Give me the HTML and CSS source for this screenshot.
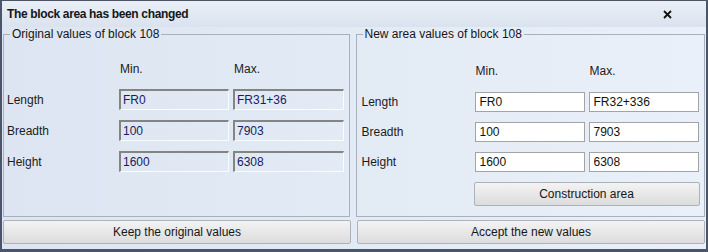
FILE: index.html
```html
<!DOCTYPE html>
<html lang="en">
  <head>
    <meta charset="UTF-8" />
    <title>The block area has been changed</title>
    <link rel="stylesheet" href="styles.css">
  </head>
  <body>
    <div class="window">
      <div class="title-bar">
        <span class="title">The block area has been changed</span>
        <svg class="close" width="9" height="9" viewBox="0 0 9 9">
          <path d="M1 1 L8 8 M8 1 L1 8" stroke="#111" stroke-width="1.8" />
        </svg>
      </div>

      <div class="groups">
        <fieldset class="group group-left">
          <legend>Original values of block 108</legend>
          <div class="grid grid-left">
            <span></span>
            <span class="head">Min.</span>
            <span class="head">Max.</span>

            <span class="label">Length</span>
            <input class="field" type="text" value="FR0" disabled />
            <input class="field" type="text" value="FR31+36" disabled />

            <span class="label">Breadth</span>
            <input class="field" type="text" value="100" disabled />
            <input class="field" type="text" value="7903" disabled />

            <span class="label">Height</span>
            <input class="field" type="text" value="1600" disabled />
            <input class="field" type="text" value="6308" disabled />
          </div>
        </fieldset>

        <fieldset class="group group-right">
          <legend>New area values of block 108</legend>
          <div class="grid grid-right">
            <span></span>
            <span class="head">Min.</span>
            <span class="head">Max.</span>

            <span class="label">Length</span>
            <input class="field" type="text" value="FR0" />
            <input class="field" type="text" value="FR32+336" />

            <span class="label">Breadth</span>
            <input class="field" type="text" value="100" />
            <input class="field" type="text" value="7903" />

            <span class="label">Height</span>
            <input class="field" type="text" value="1600" />
            <input class="field" type="text" value="6308" />

            <span></span>
            <button class="btn btn-construct" type="button">Construction area</button>
          </div>
        </fieldset>
      </div>

      <div class="actions">
        <button class="btn" type="button">Keep the original values</button>
        <button class="btn" type="button">Accept the new values</button>
      </div>
    </div>
  </body>
</html>
```

FILE: styles.css
```css
* {
  box-sizing: border-box;
}
body {
  margin: 0;
  font-family: "Liberation Sans", Arial, sans-serif;
  font-size: 12px;
  color: #1c1c1c;
  background-color: #4b5468;
}
.window {
  width: 708px;
  height: 252px;
  border-style: solid;
  border-color: #4b5468;
  border-width: 1px 2px 3px 2px;
  background: linear-gradient(to right, #dce5f1, #e9f0f9);
  display: flex;
  flex-direction: column;
}
.title-bar {
  height: 26px;
  display: flex;
  align-items: center;
  justify-content: space-between;
  padding: 0 34px 0 5px;
  background: linear-gradient(#e9eff7, #d9e2ee);
}
.title {
  font-weight: bold;
  letter-spacing: -0.35px;
  color: #161616;
}
.close {
  display: block;
}
.groups {
  height: 190px;
  display: flex;
  gap: 6px;
  padding: 0 1px;
}
.group {
  flex: 1;
  margin: 0;
  min-width: 0;
  border: 1px solid #a7b0bd;
  border-radius: 0;
}
.group-left {
  padding: 17px 3px 0 3px;
}
.group-right {
  padding: 17px 4px 0 5px;
}
legend {
  padding: 0 2px;
  line-height: 15px;
  color: #161616;
}
.group-left legend {
  margin-left: 3px;
}
.group-right legend {
  margin-left: 1px;
}
.grid {
  display: grid;
  grid-template-rows: 20px 21px 21px 21px;
  row-gap: 10px;
  column-gap: 4px;
  align-items: center;
}
.grid-left {
  grid-template-columns: 108px 110px 111px;
}
.grid-right {
  grid-template-columns: 109px 110px 110px;
  grid-template-rows: 23px 20px 20px 20px 24px;
}
.head {
  padding-left: 1px;
}
.label {
  padding-left: 0;
}
.field {
  width: 100%;
  height: 100%;
  margin: 0;
  padding: 0 0 0 4px;
  font: inherit;
  color: #111;
  background-color: #fff;
  border: 1px solid #a3a3a3;
  border-radius: 0;
  outline: none;
}
.field:disabled {
  padding-left: 2px;
  color: #1a1a62;
  background-color: transparent;
  border-width: 2px 1px 1px 2px;
  border-color: #848484 #fafcff #fafcff #848484;
}
.btn {
  margin: 0;
  padding: 0;
  font: inherit;
  color: #161616;
  background: linear-gradient(#f3f3f3, #dcdcdc);
  border: 1px solid #adb1b8;
  border-radius: 2px;
  cursor: pointer;
}
.btn:hover {
  background: linear-gradient(#f8f8f8, #e4e4e4);
}
.btn-construct {
  grid-column: 2 / 4;
  height: 24px;
  margin: 0 -1px 0 -1px;
}
.actions {
  height: 24px;
  margin: 3px 0 5px 0;
  padding: 0 1px;
  display: flex;
  gap: 6px;
}
.actions .btn {
  flex: 1;
}
```
